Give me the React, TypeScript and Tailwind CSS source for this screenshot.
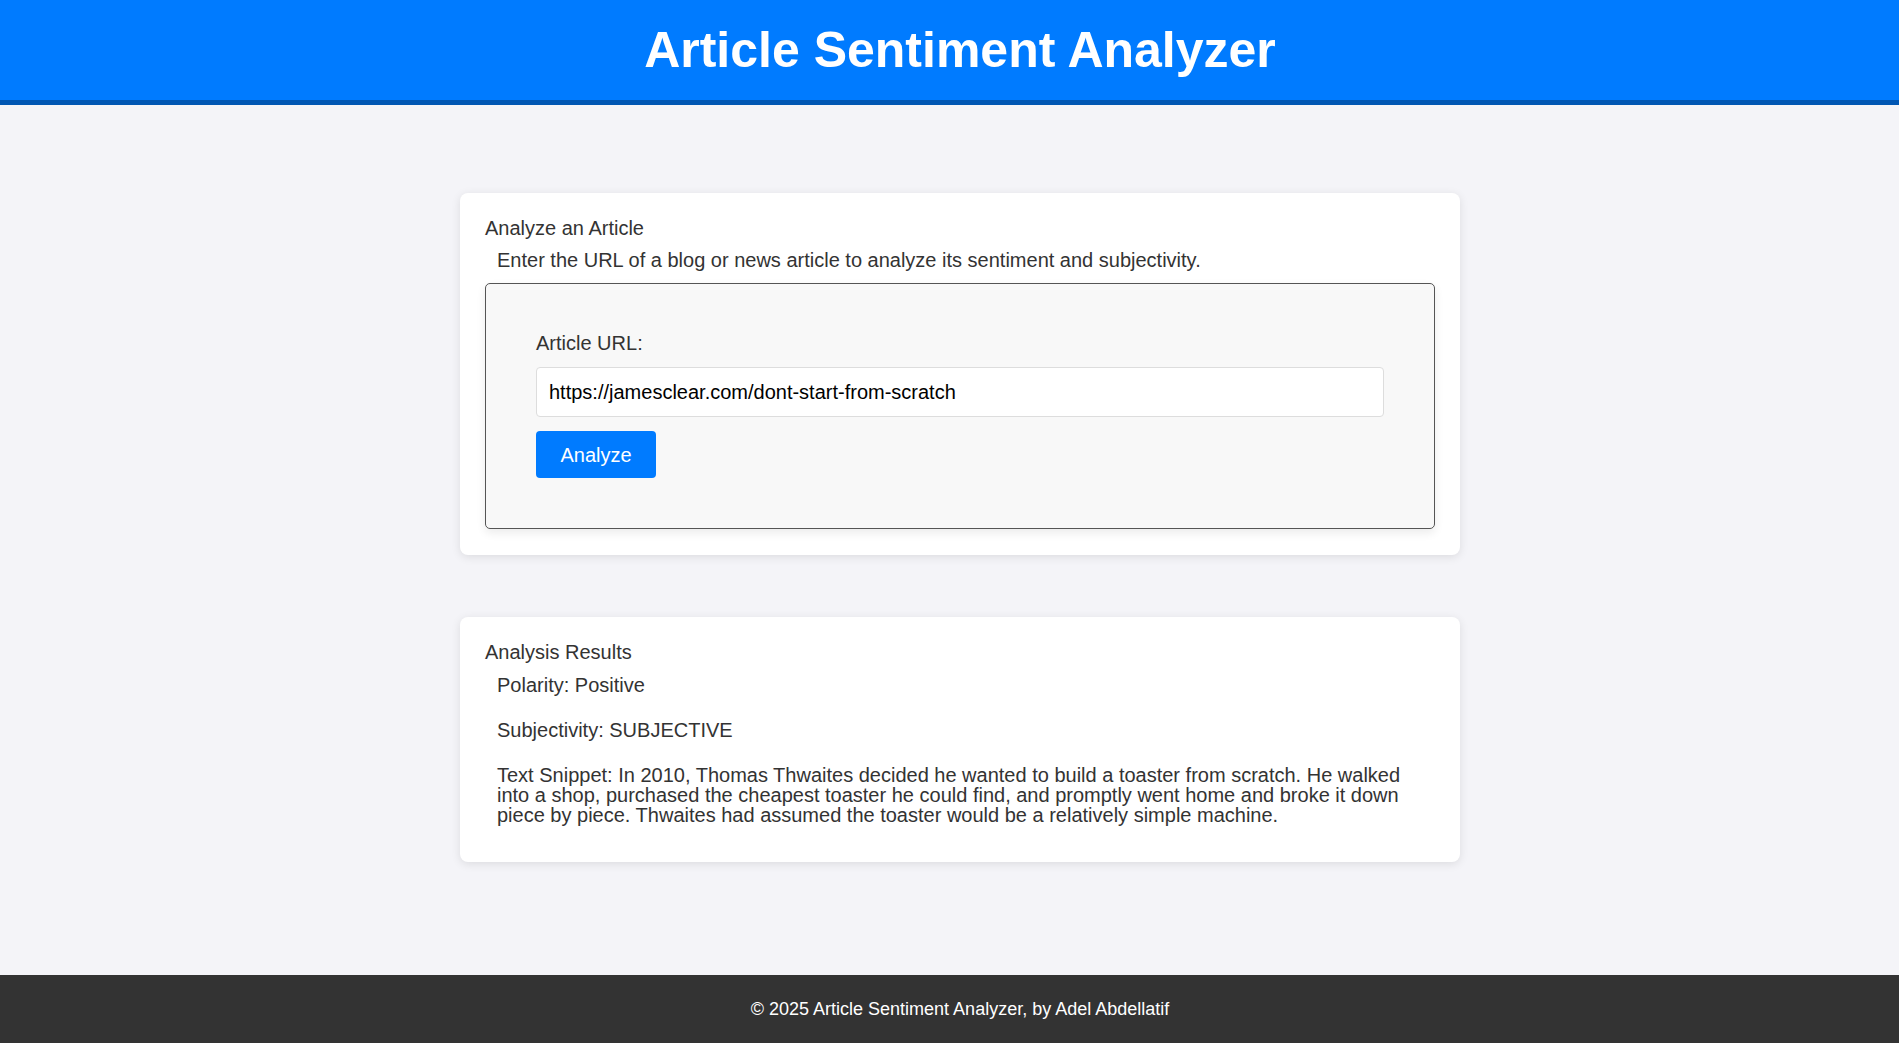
import React from "react";

// Static result shown under the form
const results = {
  polarity: "Positive",
  subjectivity: "SUBJECTIVE",
  snippet:
    "In 2010, Thomas Thwaites decided he wanted to build a toaster from scratch. He walked into a shop, purchased the cheapest toaster he could find, and promptly went home and broke it down piece by piece. Thwaites had assumed the toaster would be a relatively simple machine.",
};

function Card({ title, children }: { title: string; children: React.ReactNode }) {
  return (
    <section className="w-[1000px] mx-auto bg-white rounded-lg shadow-[0_2px_10px_rgba(0,0,0,0.1)] px-[25px] pt-[25px] pb-[25px]">
      <h2 className="text-[20px] leading-[21px] text-[#333] font-normal">{title}</h2>
      {children}
    </section>
  );
}

export default function App() {
  return (
    <div className="w-full overflow-hidden">
      <div
        className="w-[1920px] min-h-screen flex flex-col bg-[#f4f4f8] text-[#333]"
        style={{ fontFamily: '"Liberation Sans", Arial, sans-serif' }}
      >
        {/* Header */}
        <header className="h-[105px] bg-[#007bff] border-b-[5px] border-[#0056b3] flex items-center justify-center">
          <h1 className="text-[50px] font-bold text-white leading-[56px]">Article Sentiment Analyzer</h1>
        </header>

        <main className="flex-1 flex flex-col gap-[62px] pt-[88px] pb-[113px]">
          <Card title="Analyze an Article">
            <p className="pl-3 mt-[11px] text-[20px] leading-[21px]">
              Enter the URL of a blog or news article to analyze its sentiment and subjectivity.
            </p>
            <form
              className="mt-[12px] mb-px border border-[#555] rounded-[5px] bg-[#f8f8f8] shadow-[0_4px_10px_rgba(0,0,0,0.08)] px-[50px] pt-[49px] pb-[50px]"
              onSubmit={(e) => e.preventDefault()}
            >
              <label htmlFor="url" className="block text-[20px] leading-[21px] mb-[13px]">
                Article URL:
              </label>
              <input
                id="url"
                type="text"
                defaultValue="https://jamesclear.com/dont-start-from-scratch"
                className="block w-full h-[50px] bg-white border border-[#ddd] rounded-[4px] px-3 text-[20px] text-black outline-none"
              />
              <button
                type="submit"
                className="mt-[14px] h-[47px] w-[120px] bg-[#007bff] text-white text-[20px] rounded-[4px]"
              >
                Analyze
              </button>
            </form>
          </Card>

          <Card title="Analysis Results">
            <div className="px-3 mt-[12px] pb-3 flex flex-col gap-[24px] text-[20px] leading-[21px]">
              <p>Polarity: {results.polarity}</p>
              <p>Subjectivity: {results.subjectivity}</p>
              <p className="leading-[20px]">Text Snippet: {results.snippet}</p>
            </div>
          </Card>
        </main>

        {/* Footer */}
        <footer className="h-[68px] bg-[#333] text-white flex items-center justify-center">
          <p className="text-[18px]">© 2025 Article Sentiment Analyzer, by Adel Abdellatif</p>
        </footer>
      </div>
    </div>
  );
}
